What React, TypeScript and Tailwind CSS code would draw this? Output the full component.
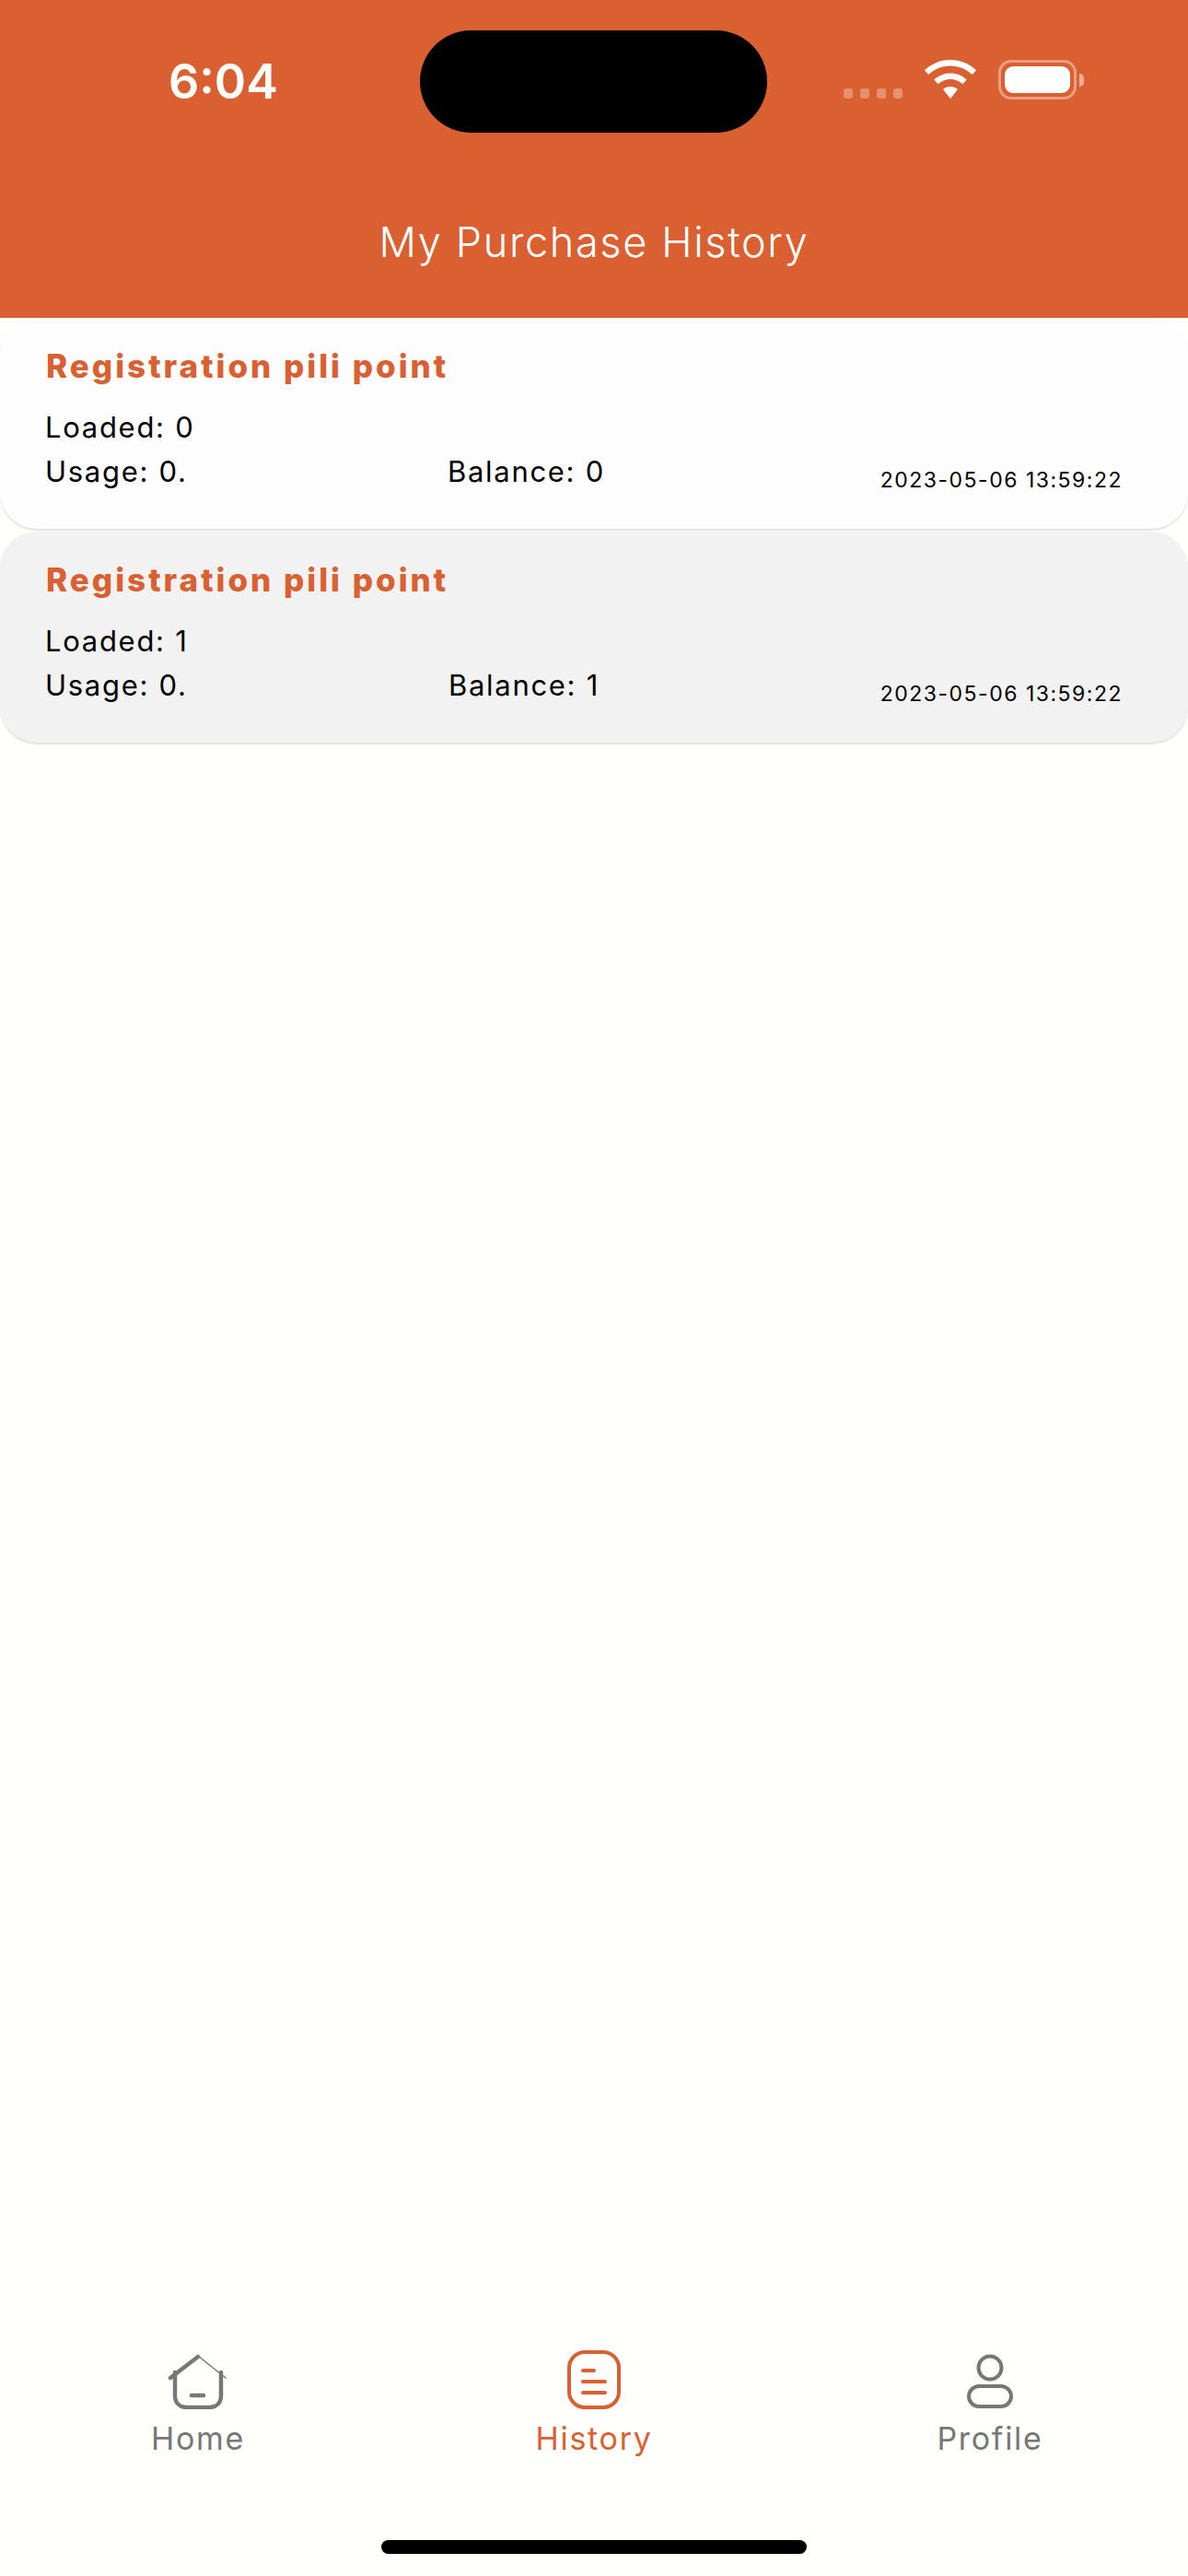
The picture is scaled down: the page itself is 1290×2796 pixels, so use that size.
const ORANGE = '#da6031'

const RECORDS = [
  { loaded: '0', balance: '0', usageGap: 'w-[437px]', bg: 'bg-[#fdfdfd]' },
  { loaded: '1', balance: '1', usageGap: 'w-[438px]', bg: 'bg-[#f2f2f3]' },
]

function Wifi() {
  return (
    <svg width="58" height="43" viewBox="0 0 58 43" fill="#fff">
      <path d="M29 0c10.8 0 20.7 4.2 28 11.2l-4.300 4.700C46.500 10 38.200 6.400 29 6.400S11.500 10 5.300 15.900L1 11.200C8.300 4.200 18.200 0 29 0z" />
      <path d="M29 14.500c6.800 0 13 2.600 17.700 7l-4.400 4.700C38.800 22.900 34.100 20.900 29 20.900s-9.800 2-13.300 5.300l-4.400-4.700c4.700-4.400 10.900-7 17.700-7z" />
      <path d="M29 29c3.100 0 5.900 1.200 8 3.100L29 42 21 32.100c2.100-1.900 4.900-3.100 8-3.100z" />
    </svg>
  )
}

function Battery() {
  return (
    <div className="flex items-center gap-[3px]">
      <div className="w-[85px] h-[43px] rounded-[14px] border-[3px] border-white/40 p-[4px]">
        <div className="w-full h-full rounded-[9px] bg-white" />
      </div>
      <div className="w-[5px] h-[14px] rounded-r-full bg-white/50" />
    </div>
  )
}

function StatusBar() {
  return (
    <div className="flex items-center h-[111px] mt-[33px]">
      <div className="w-[456px] pl-[183px] text-[52px] leading-none font-semibold text-white">6:04</div>
      <div className="w-[377px] h-[111px] rounded-full bg-black" />
      <div className="flex items-end ml-[83px] pb-[4px]">
        <div className="flex gap-[8px] mb-[1px]">
          <div className="w-[10px] h-[11px] rounded-[3px] bg-white/30" />
          <div className="w-[10px] h-[11px] rounded-[3px] bg-white/30" />
          <div className="w-[10px] h-[11px] rounded-[3px] bg-white/30" />
          <div className="w-[10px] h-[11px] rounded-[3px] bg-white/30" />
        </div>
        <div className="ml-[23px] mr-[23px]"><Wifi /></div>
        <Battery />
      </div>
    </div>
  )
}

function RecordCard({ loaded, balance, usageGap, bg }: { loaded: string; balance: string; usageGap: string; bg: string }) {
  return (
    <div className={`h-[229px] rounded-[40px] ${bg} shadow-[0_2px_2px_rgba(0,0,0,0.12)] pl-[49px] pr-[71px] pt-[29px]`}>
      <div className="pl-[1px] text-[35px] leading-[46px] font-extrabold tracking-[3px] text-[#da6031]">Registration pili point</div>
      <div className="mt-[26px] text-[31px] leading-[36px] tracking-[1.7px] text-black">Loaded: {loaded}</div>
      <div className="mt-[12px] flex items-start text-[31px] leading-[36px] tracking-[1.7px] text-black">
        <div className={usageGap}>Usage: 0.</div>
        <div>Balance: {balance}</div>
        <div className="ml-auto mt-[11px] text-[23px] leading-[32px] tracking-[1.5px]">2023-05-06 13:59:22</div>
      </div>
    </div>
  )
}

function HomeIcon() {
  return (
    <svg width="66" height="62" viewBox="0 0 66 62" fill="none" strokeLinecap="round">
      <path d="M8 22v25c0 8 5 13 13 13h24c8 0 13-5 13-13V22" stroke="#777" strokeWidth="4.500" />
      <path d="M3 28 33 5" stroke="#777" strokeWidth="4.500" />
      <path d="M33 4 63 28" stroke="#777" strokeWidth="1.500" />
      <path d="M26 47h13" stroke="#777" strokeWidth="4.500" />
    </svg>
  )
}

function HistoryIcon() {
  return (
    <svg width="58" height="64" viewBox="0 0 58 64" fill="none" stroke={ORANGE} strokeWidth="4" strokeLinecap="round">
      <rect x="2" y="2" width="54" height="60" rx="17" />
      <path d="M17 22h12M17 34h24M17 46h24" />
    </svg>
  )
}

function ProfileIcon() {
  return (
    <svg width="50" height="60" viewBox="0 0 50 60" fill="none" stroke="#777" strokeWidth="4">
      <circle cx="25" cy="15" r="12.500" />
      <rect x="2" y="35" width="46" height="22" rx="11" />
    </svg>
  )
}

function NavItem({ label, icon, active }: { label: string; icon: React.ReactNode; active?: boolean }) {
  return (
    <div className="flex flex-col items-center">
      <div className="h-[64px] flex items-end justify-center">{icon}</div>
      <div className={`mt-[9px] text-[34px] leading-[46px] tracking-[1.7px] ${active ? 'text-[#da6031]' : 'text-[#777777]'}`}>{label}</div>
    </div>
  )
}

export default function App() {
  return (
    <div className="w-[1290px] h-[2796px] flex flex-col bg-[#fffffc] font-['Inter',sans-serif]">
      {/* Header */}
      <header className="h-[345px] bg-[#da6031]">
        <StatusBar />
        <h1 className="mt-[91px] text-center text-[45px] leading-[56px] tracking-[1.65px] font-light text-white">My Purchase History</h1>
      </header>

      {/* Purchase list */}
      <main className="flex-1 flex flex-col gap-[3px]">
        {RECORDS.map((r) => (
          <RecordCard key={r.loaded} {...r} />
        ))}
      </main>

      {/* Bottom tabs */}
      <nav className="grid grid-cols-3 pb-[87px]">
        <NavItem label="Home" icon={<HomeIcon />} />
        <NavItem label="History" icon={<HistoryIcon />} active />
        <NavItem label="Profile" icon={<ProfileIcon />} />
      </nav>
      <div className="flex justify-center pb-[24px]">
        <div className="w-[462px] h-[15px] rounded-full bg-black" />
      </div>
    </div>
  )
}
